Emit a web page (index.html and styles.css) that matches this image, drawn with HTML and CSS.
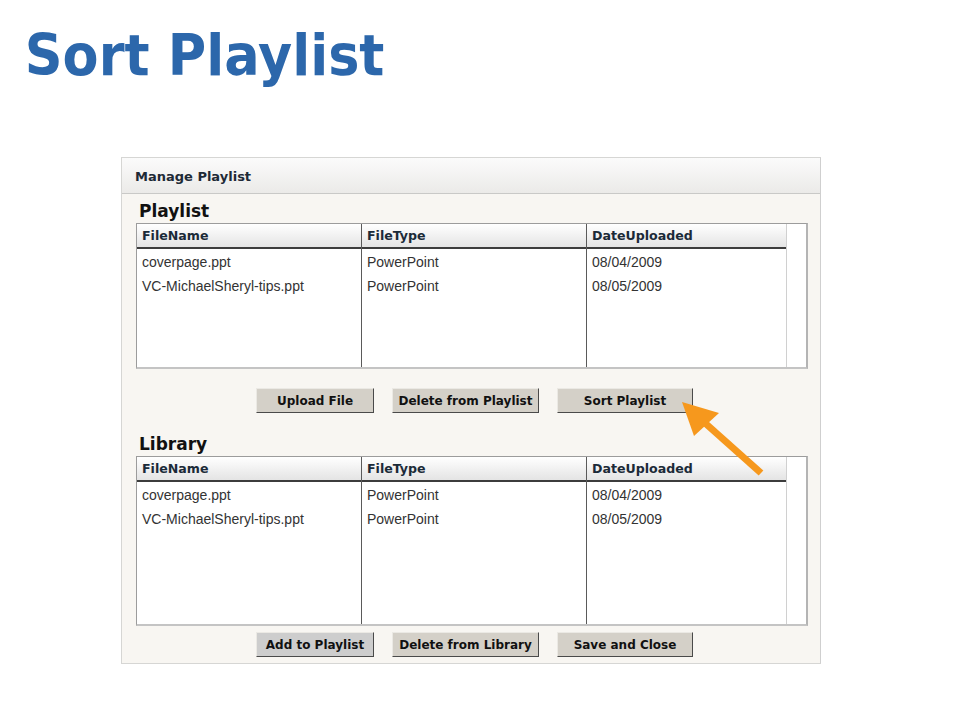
FILE: index.html
```html
<!DOCTYPE html>
<html>
<head>
<meta charset="utf-8">
<link rel="stylesheet" href="styles.css">
</head>
<body>
<h1 class="title">Sort Playlist</h1>
<div class="panel">
  <div class="panel-head">Manage Playlist</div>
  <div class="panel-body">
    <h2 class="section">Playlist</h2>
    <div class="grid grid-pl">
      <div class="col c1">
        <div class="hcell">FileName</div>
        <div class="cell first">coverpage.ppt</div>
        <div class="cell">VC-MichaelSheryl-tips.ppt</div>
      </div>
      <div class="col c2">
        <div class="hcell">FileType</div>
        <div class="cell first">PowerPoint</div>
        <div class="cell">PowerPoint</div>
      </div>
      <div class="col c3">
        <div class="hcell">DateUploaded</div>
        <div class="cell first">08/04/2009</div>
        <div class="cell">08/05/2009</div>
      </div>
      <div class="track"></div>
    </div>
    <div class="btns btns-top">
      <button class="btn w1">Upload File</button>
      <button class="btn w2">Delete from Playlist</button>
      <button class="btn w3">Sort Playlist</button>
    </div>
    <h2 class="section section-lib">Library</h2>
    <div class="grid grid-lib">
      <div class="col c1">
        <div class="hcell">FileName</div>
        <div class="cell first">coverpage.ppt</div>
        <div class="cell">VC-MichaelSheryl-tips.ppt</div>
      </div>
      <div class="col c2">
        <div class="hcell">FileType</div>
        <div class="cell first">PowerPoint</div>
        <div class="cell">PowerPoint</div>
      </div>
      <div class="col c3">
        <div class="hcell">DateUploaded</div>
        <div class="cell first">08/04/2009</div>
        <div class="cell">08/05/2009</div>
      </div>
      <div class="track"></div>
    </div>
    <div class="btns btns-bottom">
      <button class="btn w1 btn-focus">Add to Playlist</button>
      <button class="btn w2">Delete from Library</button>
      <button class="btn w3">Save and Close</button>
    </div>
  </div>
  <svg class="arrow" width="120" height="100" viewBox="0 0 120 100">
    <line x1="44" y1="42" x2="100" y2="92" stroke="#f6981d" stroke-width="7"/>
    <polygon points="21,21 58,32 33,55" fill="#f6981d"/>
  </svg>
</div>
</body>
</html>
```

FILE: styles.css
```css
html, body {
  margin: 0;
  padding: 0;
  background: #ffffff;
}

.title {
  margin: 0;
  padding: 22px 0 0 27px;
  height: 66px;
  font-family: "DejaVu Sans", Verdana, sans-serif;
  font-weight: bold;
  font-size: 57px;
  line-height: 66px;
  color: #2c67ab;
  transform: scaleX(0.92);
  transform-origin: left center;
  white-space: nowrap;
}

.panel {
  position: relative;
  margin: 69px 0 0 121px;
  width: 700px;
  box-sizing: border-box;
  border: 1px solid #d6d6d4;
  border-right-color: #cfcfcf;
  background: #f8f6f2;
}

.panel-head {
  height: 36px;
  box-sizing: border-box;
  border-bottom: 1px solid #c9c9c7;
  background: linear-gradient(#fbfbfb, #ebeae8);
  font-family: "DejaVu Sans", Verdana, sans-serif;
  font-weight: bold;
  font-size: 13px;
  line-height: 34px;
  padding-left: 13px;
  padding-top: 2px;
  color: #1e2a36;
}

.panel-body {
  padding: 7px 12px 6px 14px;
}

.section {
  margin: 0 0 2px 3px;
  font-family: "DejaVu Sans", Verdana, sans-serif;
  font-weight: bold;
  font-size: 17px;
  line-height: 20px;
  height: 20px;
  color: #111111;
}

.section-lib {
  margin-top: 21px;
}

.grid {
  display: flex;
  box-sizing: border-box;
  width: 672px;
  border: 1px solid #9c9c9c;
  border-right: 2px solid #b4b4b4;
  border-bottom: 2px solid #c4c4c4;
  background: #ffffff;
}

.grid-pl { height: 146px; }
.grid-lib { height: 170px; }

.col {
  box-sizing: border-box;
  border-right: 1px solid #5a5a5a;
  display: flex;
  flex-direction: column;
}

.c1 { width: 225px; }
.c2 { width: 225px; }
.c3 { width: 200px; border-right-color: #d0d0d0; }

.track {
  flex: 1;
  background: #ffffff;
}

.hcell {
  height: 25px;
  box-sizing: border-box;
  border-bottom: 2px solid #3c3c3c;
  background: linear-gradient(#ffffff, #e4e4e4);
  padding-left: 5px;
  font-family: "DejaVu Sans", Verdana, sans-serif;
  font-weight: bold;
  font-size: 12.6px;
  line-height: 23px;
  color: #1b2a38;
  white-space: nowrap;
}

.cell {
  height: 24px;
  padding-left: 5px;
  font-family: "Liberation Sans", Arial, sans-serif;
  font-size: 14px;
  line-height: 24px;
  color: #333333;
  white-space: nowrap;
}

.cell.first {
  margin-top: 1px;
}

.btns {
  display: flex;
  gap: 18px;
  padding-left: 120px;
}

.btns-top { margin-top: 19px; }
.btns-bottom { margin-top: 6px; }

.btn {
  height: 25px;
  box-sizing: border-box;
  margin: 0;
  padding: 0;
  background: #d4d0c8;
  border: 1px solid;
  border-color: #ebe9e4 #4a4a4a #4a4a4a #ebe9e4;
  font-family: "DejaVu Sans", Verdana, sans-serif;
  font-weight: bold;
  font-size: 12px;
  line-height: 22px;
  color: #111111;
  text-align: center;
  white-space: nowrap;
}

.btn-focus {
  background: #cdcdcd;
}

.w1 { width: 118px; }
.w2 { width: 147px; }
.w3 { width: 136px; }

.arrow {
  position: absolute;
  left: 539px;
  top: 223px;
}
```
